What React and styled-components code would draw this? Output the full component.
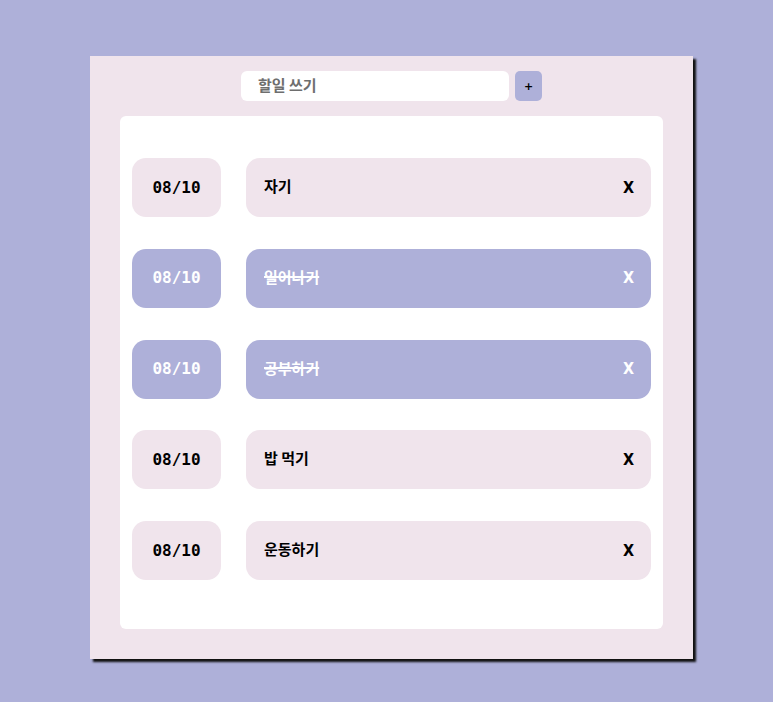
import styled, { createGlobalStyle } from "styled-components";

const GlobalStyle = createGlobalStyle`
  html, body {
    margin: 0;
    padding: 0;
    background: #aeb0d9;
    font-family: "Noto Sans CJK KR", "Noto Sans", sans-serif;
  }
`;

const todos = [
  { date: "08/10", text: "자기", done: false },
  { date: "08/10", text: "일어나기", done: true },
  { date: "08/10", text: "공부하기", done: true },
  { date: "08/10", text: "밥 먹기", done: false },
  { date: "08/10", text: "운동하기", done: false },
];

const App = () => {
  return (
    <>
      <GlobalStyle />
      <Page>
        <Panel>
          <Form onSubmit={(e) => e.preventDefault()}>
            <Input type="text" placeholder="할일 쓰기" />
            <AddButton>+</AddButton>
          </Form>
          <List>
            {todos.map((item, i) => (
              <Row key={i}>
                <DateBox $done={item.done}>{item.date}</DateBox>
                <TaskBox $done={item.done}>
                  <TaskText $done={item.done}>{item.text}</TaskText>
                  <Remove $done={item.done}>X</Remove>
                </TaskBox>
              </Row>
            ))}
          </List>
        </Panel>
      </Page>
    </>
  );
};
export default App;

const Page = styled.div`
  min-height: 702px;
  padding: 56px 0 0 90px;
  box-sizing: border-box;
`;
const Panel = styled.div`
  width: 603px;
  height: 603px;
  box-sizing: border-box;
  background: #f0e4ec;
  box-shadow: 3px 3px 2px #111;
  padding: 15px 30px 30px;
  display: flex;
  flex-direction: column;
`;
const Form = styled.form`
  display: flex;
  justify-content: center;
  align-items: center;
  gap: 6px;
  height: 30px;
`;
const Input = styled.input`
  width: 268px;
  height: 30px;
  box-sizing: border-box;
  border: none;
  border-radius: 6px;
  background: #fff;
  padding: 0 17px 3px;
  font-family: "Noto Sans CJK KR", sans-serif;
  font-weight: 700;
  font-size: 15px;
  outline: none;
  &::placeholder {
    color: #6e6e6e;
  }
`;
const AddButton = styled.button`
  width: 27px;
  height: 30px;
  border: none;
  border-radius: 5px;
  background: #aeb0d9;
  color: #000;
  font-family: "DejaVu Sans", sans-serif;
  font-weight: 700;
  font-size: 11px;
  line-height: 1;
  padding: 0;
`;
const List = styled.div`
  margin-top: 15px;
  flex: 1;
  background: #fff;
  border-radius: 6px;
  padding: 42px 12px 0;
  display: flex;
  flex-direction: column;
  gap: 31.75px;
`;
const Row = styled.div`
  display: flex;
  gap: 25px;
  height: 59px;
  flex: none;
`;
const DateBox = styled.div`
  width: 89px;
  flex: none;
  border-radius: 14px;
  background: ${(p) => (p.$done ? "#aeb0d9" : "#f0e4ec")};
  color: ${(p) => (p.$done ? "#fff" : "#000")};
  display: flex;
  align-items: center;
  justify-content: center;
  font-family: "DejaVu Sans Mono", monospace;
  font-weight: 700;
  font-size: 16px;
  line-height: 1;
`;
const TaskBox = styled.div`
  flex: 1;
  border-radius: 14px;
  background: ${(p) => (p.$done ? "#aeb0d9" : "#f0e4ec")};
  display: flex;
  align-items: center;
  justify-content: space-between;
  padding: 0 17px 0 18px;
`;
const TaskText = styled.span`
  font-family: "Noto Sans CJK KR", sans-serif;
  font-weight: 700;
  font-size: 15px;
  line-height: 1;
  padding-bottom: 4px;
  color: ${(p) => (p.$done ? "#fff" : "#000")};
  text-decoration: ${(p) => (p.$done ? "line-through" : "none")};
  text-decoration-thickness: 2px;
`;
const Remove = styled.span`
  font-family: "DejaVu Sans Condensed", "DejaVu Sans", sans-serif;
  font-weight: 700;
  font-size: 16px;
  line-height: 1;
  color: ${(p) => (p.$done ? "#fff" : "#000")};
`;
